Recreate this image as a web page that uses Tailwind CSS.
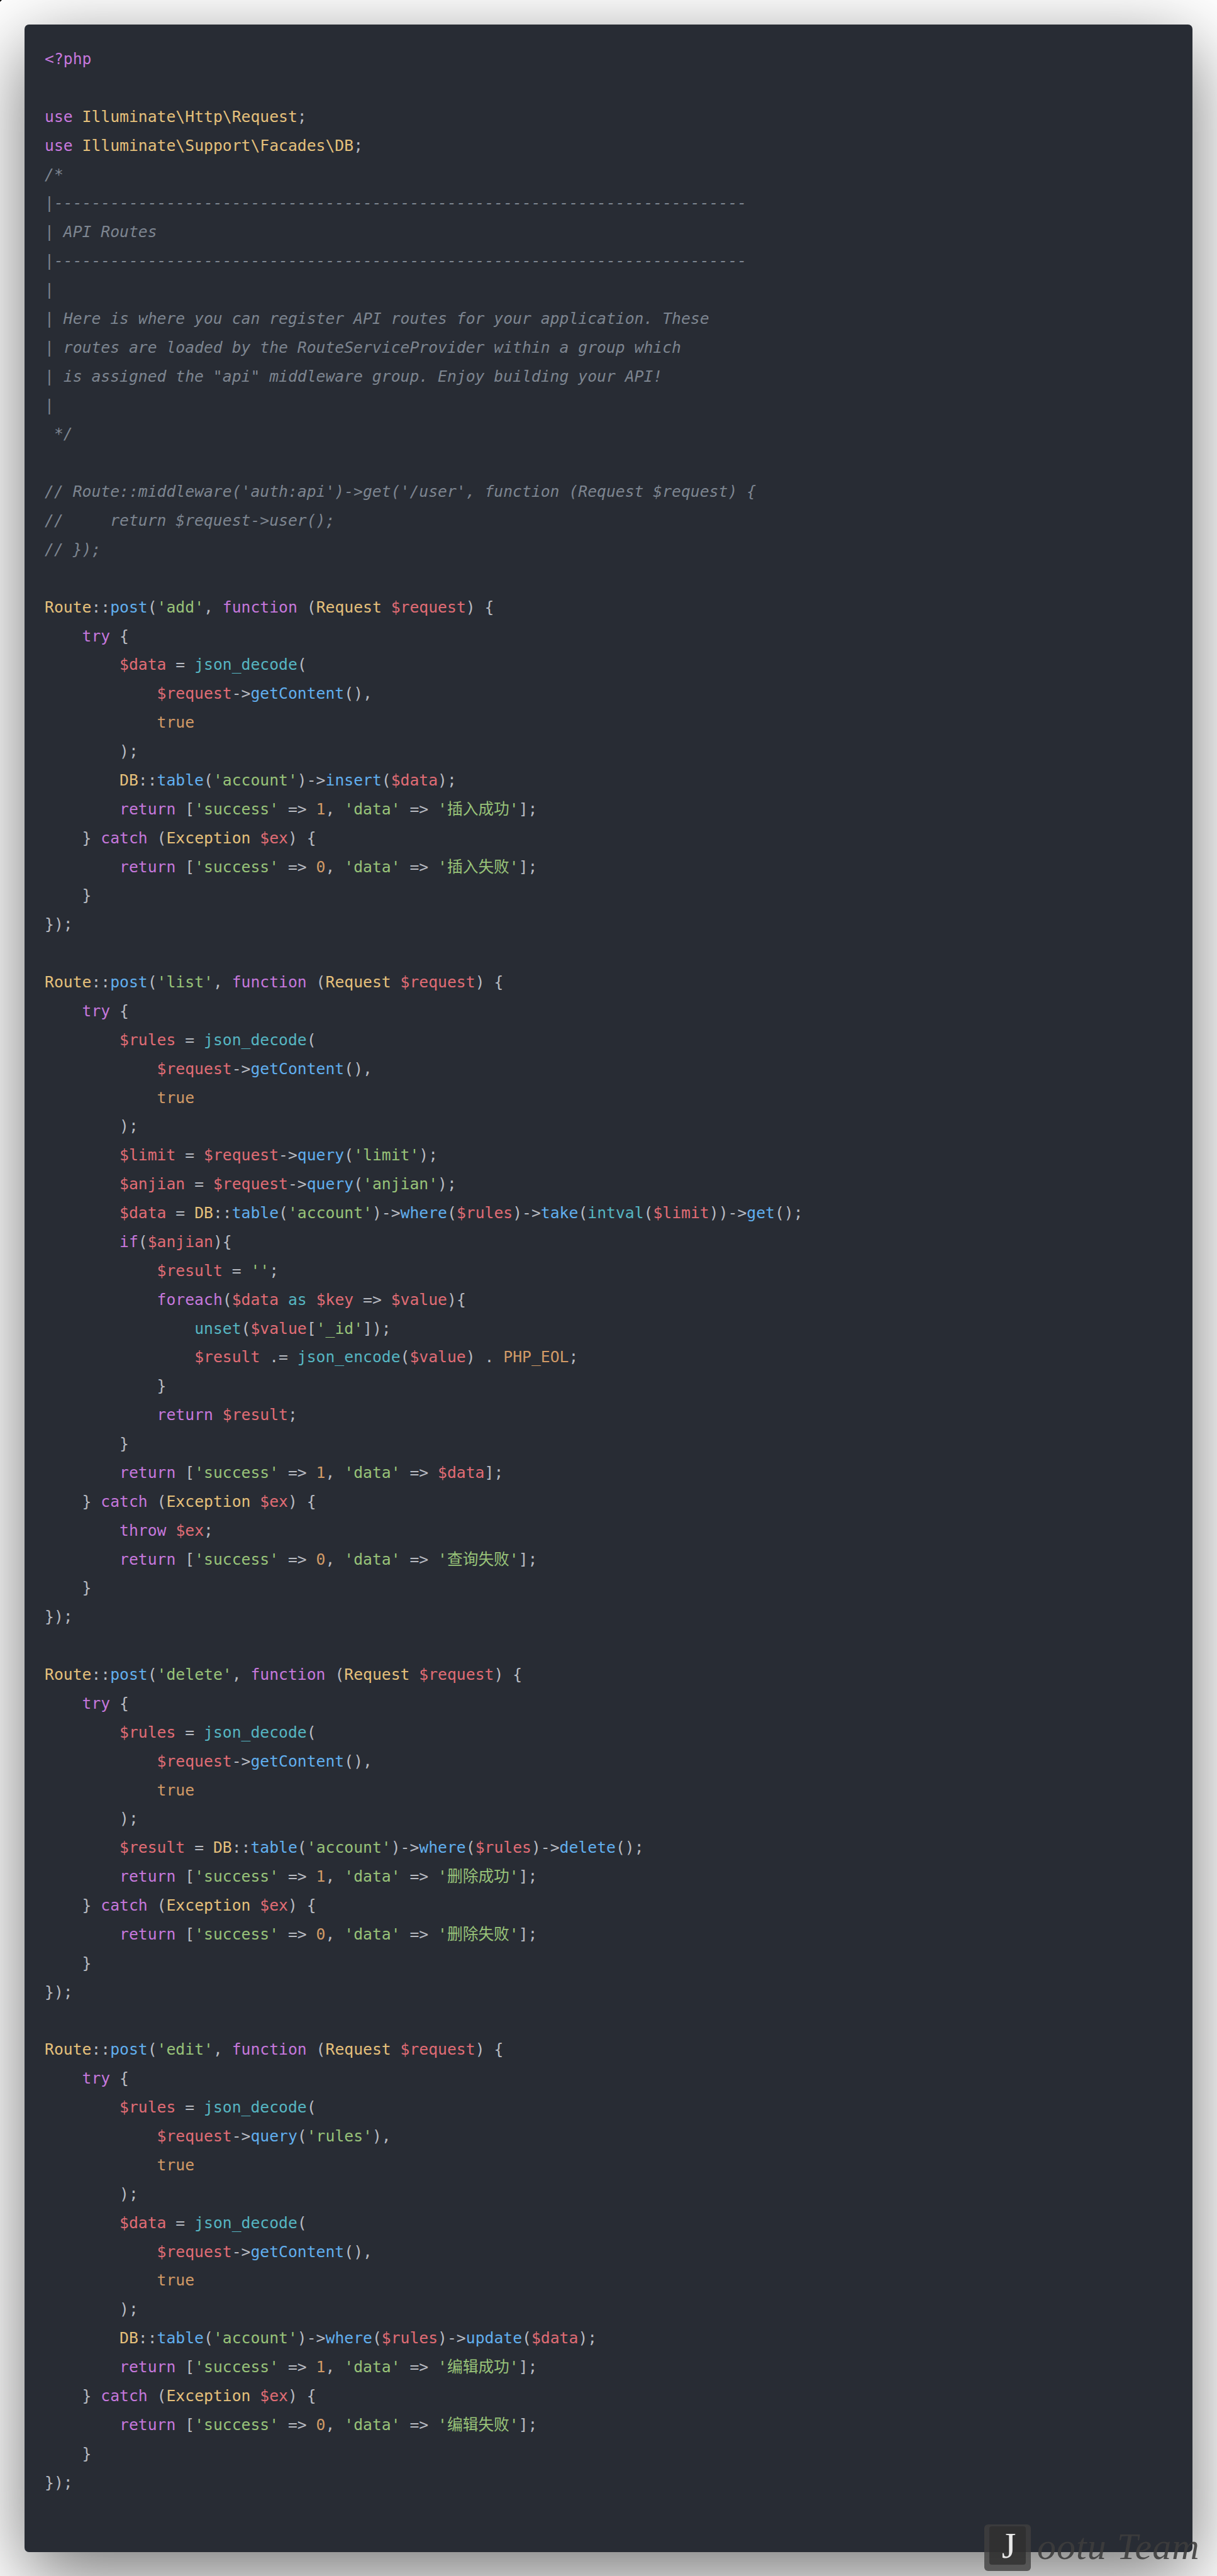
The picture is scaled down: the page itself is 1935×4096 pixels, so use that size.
<!DOCTYPE html>
<html lang="en">
<head>
<meta charset="UTF-8">
<title>routes/api.php</title>
<script src="https://cdn.jsdelivr.net/npm/@tailwindcss/browser@4"></script>
</head>
<body class="relative w-[1935px] h-[4096px] overflow-hidden bg-white">
<div class="absolute left-0 top-0 size-0 border-t-[3px] border-r-[3px] border-t-black border-r-transparent"></div>
<main class="ml-[39px] mt-[39px] w-[1857px] h-[4019px] rounded-[7px] bg-[#282c34] shadow-[0_35px_120px_rgba(0,0,0,0.55)] px-[32px] pt-[32px]">
<pre class="font-['DejaVu_Sans_Mono','Noto_Sans_CJK_SC',monospace] text-[24.72px] leading-[45.87px] text-[#b8bbc2]"><span class="text-[#c678dd]">&lt;?php</span>

<span class="text-[#c678dd]">use</span> <span class="text-[#e5c07b]">Illuminate\Http\Request</span>;
<span class="text-[#c678dd]">use</span> <span class="text-[#e5c07b]">Illuminate\Support\Facades\DB</span>;
<span class="italic text-[#7d8590]">/*
|--------------------------------------------------------------------------
| API Routes
|--------------------------------------------------------------------------
|
| Here is where you can register API routes for your application. These
| routes are loaded by the RouteServiceProvider within a group which
| is assigned the "api" middleware group. Enjoy building your API!
|
 */</span>

<span class="italic text-[#7d8590]">// Route::middleware('auth:api')->get('/user', function (Request $request) {
//     return $request->user();
// });</span>

<span class="text-[#e5c07b]">Route</span>::<span class="text-[#61afef]">post</span>(<span class="text-[#98c379]">'add'</span>, <span class="text-[#c678dd]">function</span> (<span class="text-[#e5c07b]">Request</span> <span class="text-[#e06c75]">$request</span>) {
    <span class="text-[#c678dd]">try</span> {
        <span class="text-[#e06c75]">$data</span> = <span class="text-[#56b6c2]">json_decode</span>(
            <span class="text-[#e06c75]">$request</span>-&gt;<span class="text-[#61afef]">getContent</span>(),
            <span class="text-[#d19a66]">true</span>
        );
        <span class="text-[#e5c07b]">DB</span>::<span class="text-[#61afef]">table</span>(<span class="text-[#98c379]">'account'</span>)-&gt;<span class="text-[#61afef]">insert</span>(<span class="text-[#e06c75]">$data</span>);
        <span class="text-[#c678dd]">return</span> [<span class="text-[#98c379]">'success'</span> =&gt; <span class="text-[#d19a66]">1</span>, <span class="text-[#98c379]">'data'</span> =&gt; <span class="text-[#98c379]">'插入成功'</span>];
    } <span class="text-[#c678dd]">catch</span> (<span class="text-[#e5c07b]">Exception</span> <span class="text-[#e06c75]">$ex</span>) {
        <span class="text-[#c678dd]">return</span> [<span class="text-[#98c379]">'success'</span> =&gt; <span class="text-[#d19a66]">0</span>, <span class="text-[#98c379]">'data'</span> =&gt; <span class="text-[#98c379]">'插入失败'</span>];
    }
});

<span class="text-[#e5c07b]">Route</span>::<span class="text-[#61afef]">post</span>(<span class="text-[#98c379]">'list'</span>, <span class="text-[#c678dd]">function</span> (<span class="text-[#e5c07b]">Request</span> <span class="text-[#e06c75]">$request</span>) {
    <span class="text-[#c678dd]">try</span> {
        <span class="text-[#e06c75]">$rules</span> = <span class="text-[#56b6c2]">json_decode</span>(
            <span class="text-[#e06c75]">$request</span>-&gt;<span class="text-[#61afef]">getContent</span>(),
            <span class="text-[#d19a66]">true</span>
        );
        <span class="text-[#e06c75]">$limit</span> = <span class="text-[#e06c75]">$request</span>-&gt;<span class="text-[#61afef]">query</span>(<span class="text-[#98c379]">'limit'</span>);
        <span class="text-[#e06c75]">$anjian</span> = <span class="text-[#e06c75]">$request</span>-&gt;<span class="text-[#61afef]">query</span>(<span class="text-[#98c379]">'anjian'</span>);
        <span class="text-[#e06c75]">$data</span> = <span class="text-[#e5c07b]">DB</span>::<span class="text-[#61afef]">table</span>(<span class="text-[#98c379]">'account'</span>)-&gt;<span class="text-[#61afef]">where</span>(<span class="text-[#e06c75]">$rules</span>)-&gt;<span class="text-[#61afef]">take</span>(<span class="text-[#56b6c2]">intval</span>(<span class="text-[#e06c75]">$limit</span>))-&gt;<span class="text-[#61afef]">get</span>();
        <span class="text-[#c678dd]">if</span>(<span class="text-[#e06c75]">$anjian</span>){
            <span class="text-[#e06c75]">$result</span> = <span class="text-[#98c379]">''</span>;
            <span class="text-[#c678dd]">foreach</span>(<span class="text-[#e06c75]">$data</span> <span class="text-[#56b6c2]">as</span> <span class="text-[#e06c75]">$key</span> =&gt; <span class="text-[#e06c75]">$value</span>){
                <span class="text-[#56b6c2]">unset</span>(<span class="text-[#e06c75]">$value</span>[<span class="text-[#98c379]">'_id'</span>]);
                <span class="text-[#e06c75]">$result</span> .= <span class="text-[#56b6c2]">json_encode</span>(<span class="text-[#e06c75]">$value</span>) . <span class="text-[#d19a66]">PHP_EOL</span>;
            }
            <span class="text-[#c678dd]">return</span> <span class="text-[#e06c75]">$result</span>;
        }
        <span class="text-[#c678dd]">return</span> [<span class="text-[#98c379]">'success'</span> =&gt; <span class="text-[#d19a66]">1</span>, <span class="text-[#98c379]">'data'</span> =&gt; <span class="text-[#e06c75]">$data</span>];
    } <span class="text-[#c678dd]">catch</span> (<span class="text-[#e5c07b]">Exception</span> <span class="text-[#e06c75]">$ex</span>) {
        <span class="text-[#c678dd]">throw</span> <span class="text-[#e06c75]">$ex</span>;
        <span class="text-[#c678dd]">return</span> [<span class="text-[#98c379]">'success'</span> =&gt; <span class="text-[#d19a66]">0</span>, <span class="text-[#98c379]">'data'</span> =&gt; <span class="text-[#98c379]">'查询失败'</span>];
    }
});

<span class="text-[#e5c07b]">Route</span>::<span class="text-[#61afef]">post</span>(<span class="text-[#98c379]">'delete'</span>, <span class="text-[#c678dd]">function</span> (<span class="text-[#e5c07b]">Request</span> <span class="text-[#e06c75]">$request</span>) {
    <span class="text-[#c678dd]">try</span> {
        <span class="text-[#e06c75]">$rules</span> = <span class="text-[#56b6c2]">json_decode</span>(
            <span class="text-[#e06c75]">$request</span>-&gt;<span class="text-[#61afef]">getContent</span>(),
            <span class="text-[#d19a66]">true</span>
        );
        <span class="text-[#e06c75]">$result</span> = <span class="text-[#e5c07b]">DB</span>::<span class="text-[#61afef]">table</span>(<span class="text-[#98c379]">'account'</span>)-&gt;<span class="text-[#61afef]">where</span>(<span class="text-[#e06c75]">$rules</span>)-&gt;<span class="text-[#61afef]">delete</span>();
        <span class="text-[#c678dd]">return</span> [<span class="text-[#98c379]">'success'</span> =&gt; <span class="text-[#d19a66]">1</span>, <span class="text-[#98c379]">'data'</span> =&gt; <span class="text-[#98c379]">'删除成功'</span>];
    } <span class="text-[#c678dd]">catch</span> (<span class="text-[#e5c07b]">Exception</span> <span class="text-[#e06c75]">$ex</span>) {
        <span class="text-[#c678dd]">return</span> [<span class="text-[#98c379]">'success'</span> =&gt; <span class="text-[#d19a66]">0</span>, <span class="text-[#98c379]">'data'</span> =&gt; <span class="text-[#98c379]">'删除失败'</span>];
    }
});

<span class="text-[#e5c07b]">Route</span>::<span class="text-[#61afef]">post</span>(<span class="text-[#98c379]">'edit'</span>, <span class="text-[#c678dd]">function</span> (<span class="text-[#e5c07b]">Request</span> <span class="text-[#e06c75]">$request</span>) {
    <span class="text-[#c678dd]">try</span> {
        <span class="text-[#e06c75]">$rules</span> = <span class="text-[#56b6c2]">json_decode</span>(
            <span class="text-[#e06c75]">$request</span>-&gt;<span class="text-[#61afef]">query</span>(<span class="text-[#98c379]">'rules'</span>),
            <span class="text-[#d19a66]">true</span>
        );
        <span class="text-[#e06c75]">$data</span> = <span class="text-[#56b6c2]">json_decode</span>(
            <span class="text-[#e06c75]">$request</span>-&gt;<span class="text-[#61afef]">getContent</span>(),
            <span class="text-[#d19a66]">true</span>
        );
        <span class="text-[#e5c07b]">DB</span>::<span class="text-[#61afef]">table</span>(<span class="text-[#98c379]">'account'</span>)-&gt;<span class="text-[#61afef]">where</span>(<span class="text-[#e06c75]">$rules</span>)-&gt;<span class="text-[#61afef]">update</span>(<span class="text-[#e06c75]">$data</span>);
        <span class="text-[#c678dd]">return</span> [<span class="text-[#98c379]">'success'</span> =&gt; <span class="text-[#d19a66]">1</span>, <span class="text-[#98c379]">'data'</span> =&gt; <span class="text-[#98c379]">'编辑成功'</span>];
    } <span class="text-[#c678dd]">catch</span> (<span class="text-[#e5c07b]">Exception</span> <span class="text-[#e06c75]">$ex</span>) {
        <span class="text-[#c678dd]">return</span> [<span class="text-[#98c379]">'success'</span> =&gt; <span class="text-[#d19a66]">0</span>, <span class="text-[#98c379]">'data'</span> =&gt; <span class="text-[#98c379]">'编辑失败'</span>];
    }
});</pre>
</main>
<!-- watermark sits over the card corner -->
<div class="absolute left-[1565px] top-[4014px] flex items-start">
  <div class="size-[74px] rounded-[6px] bg-[#404040]/80 p-[3px_8px_10px_8px]">
    <div class="h-full rounded-[4px] bg-[#2c2c2c]/70 pl-[4px] flex items-center justify-center font-['Liberation_Serif',serif] text-[58px] leading-none text-[#e8e8e8]">J</div>
  </div>
  <span class="ml-[10px] -mt-px font-['Liberation_Serif',serif] italic text-[60px] leading-[72px] tracking-[1px] whitespace-nowrap text-[#3d3d3d]/90">ootu Team</span>
</div>
</body>
</html>
